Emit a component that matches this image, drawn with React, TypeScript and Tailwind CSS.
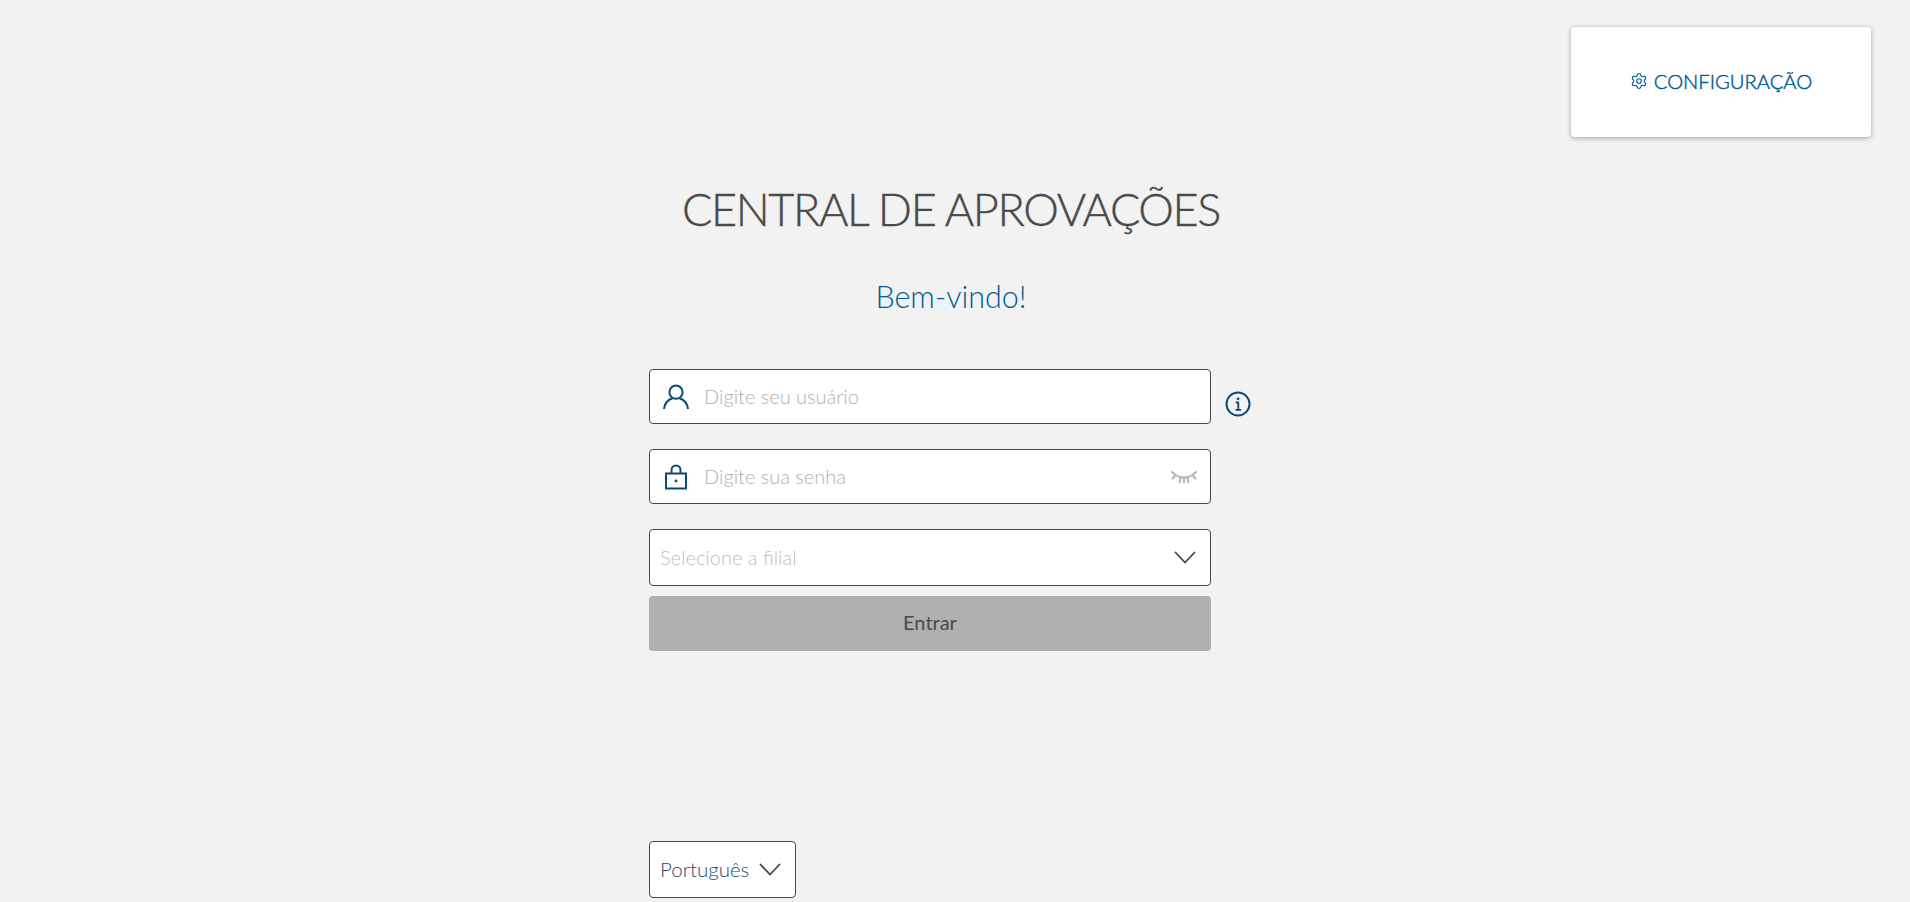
import React from 'react';
import { Settings } from 'lucide-react';

const font = "font-['Lato','Open_Sans',sans-serif]";

function Chevron({ className }: { className?: string }) {
  return (
    <svg className={className} viewBox="0 0 22 13" fill="none" stroke="#454545" strokeWidth={1.8} strokeLinecap="round" strokeLinejoin="round">
      <path d="M1.500 1.500 11 11.500 20.500 1.500" />
    </svg>
  );
}

function UserIcon() {
  return (
    <svg className="w-[26px] h-[26px] shrink-0" viewBox="0 0 26 26" fill="none" stroke="#0b4a74" strokeWidth={2}>
      <circle cx="13" cy="8.200" r="6.600" />
      <path d="M1 25c.6-5.600 4.600-9.400 8.400-10.800M25 25c-.6-5.600-4.600-9.400-8.400-10.800" />
    </svg>
  );
}

function LockIcon() {
  return (
    <svg className="w-[26px] h-[26px] shrink-0" viewBox="0 0 26 26" fill="none" stroke="#0b4a74" strokeWidth={2}>
      <rect x="3" y="9.500" width="20" height="15" />
      <path d="M8.500 9.500V6a4.500 4.500 0 0 1 9 0v3.500" />
      <circle cx="13" cy="17" r="1.400" fill="#0b4a74" stroke="none" />
    </svg>
  );
}

function EyeOffIcon() {
  return (
    <svg className="w-[26px] h-[16px] shrink-0 mt-[3px]" viewBox="0 0 26 16" fill="none" stroke="#b5b5b5" strokeWidth={2} strokeLinecap="round">
      <path d="M4 4.800c2.500 1.800 5.500 2.700 9 2.700s6.500-.9 9-2.700" />
      <path d="M1 2 4.500 5 1.500 8.500M25 2 21.500 5 24.500 8.500M9.500 7.500 8.800 12.500M16.500 7.500 17.200 12.500M13 8v4.500" />
    </svg>
  );
}

function InfoIcon() {
  return (
    <svg className="w-[26px] h-[26px] shrink-0" viewBox="0 0 26 26" fill="none" stroke="#0b4a74">
      <circle cx="13" cy="13" r="11.500" strokeWidth={2} />
      <circle cx="13" cy="7.800" r="1.400" fill="#0b4a74" stroke="none" />
      <path d="M10.800 11.500H13.300V18.500M10.500 18.800h5.500" strokeWidth={1.800} />
    </svg>
  );
}

export default function App() {
  return (
    <div className={`h-[902px] overflow-hidden bg-[#f2f2f2] ${font}`}>
      <div className="flex justify-end pt-[27px] pr-[39px]">
        <div className="w-[300px] h-[110px] bg-white rounded-[4px] shadow-[0_1px_5px_rgba(0,0,0,0.35)] flex items-center justify-center gap-[6px]">
          <Settings className="w-[18px] h-[18px] text-[#005b94] -mt-[2px]" strokeWidth={1.500} />
          <span className="text-[20.200px] font-light text-[#005b94] leading-none -mt-[1px] [-webkit-text-stroke:0.450px_#005b94]">CONFIGURAÇÃO</span>
        </div>
      </div>

      <div className="w-[604px] ml-[649px]">
        <h1 className="mt-[45px] h-[56px] flex items-center justify-center text-[45px] font-light tracking-[-1.400px] text-[#4a4a4a] whitespace-nowrap [-webkit-text-stroke:0.400px_#4a4a4a]">
          CENTRAL DE APROVAÇÕES
        </h1>
        <p className="mt-[39px] h-[40px] flex items-center justify-center text-[30.500px] font-light text-[#005b94]">
          Bem-vindo!
        </p>

        <div className="mt-[52px] w-[562px] flex flex-col">
          <div className="relative h-[55px] bg-white border border-[#4a4a4a] rounded-[4px] flex items-center pl-[13px] gap-[15px]">
            <UserIcon />
            <span className="pb-[2px] text-[20px] font-light text-[#b0b0b0]">Digite seu usuário</span>
            <div className="absolute left-[575px] top-[21px]">
              <InfoIcon />
            </div>
          </div>

          <div className="mt-[25px] h-[55px] bg-white border border-[#4a4a4a] rounded-[4px] flex items-center pl-[13px] pr-[13px] gap-[15px]">
            <LockIcon />
            <span className="pb-[2px] flex-1 text-[20px] font-light text-[#b0b0b0]">Digite sua senha</span>
            <EyeOffIcon />
          </div>

          <div className="mt-[25px] h-[57px] bg-white border border-[#4a4a4a] rounded-[4px] flex items-center justify-between pl-[10px] pr-[14px]">
            <span className="pb-[2px] text-[20px] font-light text-[#bdbdbd]">Selecione a filial</span>
            <Chevron className="w-[22px] h-[13px]" />
          </div>

          <button className="mt-[10px] h-[55px] pb-[3px] bg-[#b0b0b0] rounded-[4px] text-[20px] font-normal text-[#4a4a4a]">
            Entrar
          </button>

          <div className="mt-[190px] w-[147px] h-[57px] bg-white border border-[#4a4a4a] rounded-[4px] flex items-center justify-between pl-[10px] pr-[14px]">
            <span className="text-[20.500px] font-light text-[#2c4a68]">Português</span>
            <Chevron className="w-[22px] h-[13px]" />
          </div>
        </div>
      </div>
    </div>
  );
}
